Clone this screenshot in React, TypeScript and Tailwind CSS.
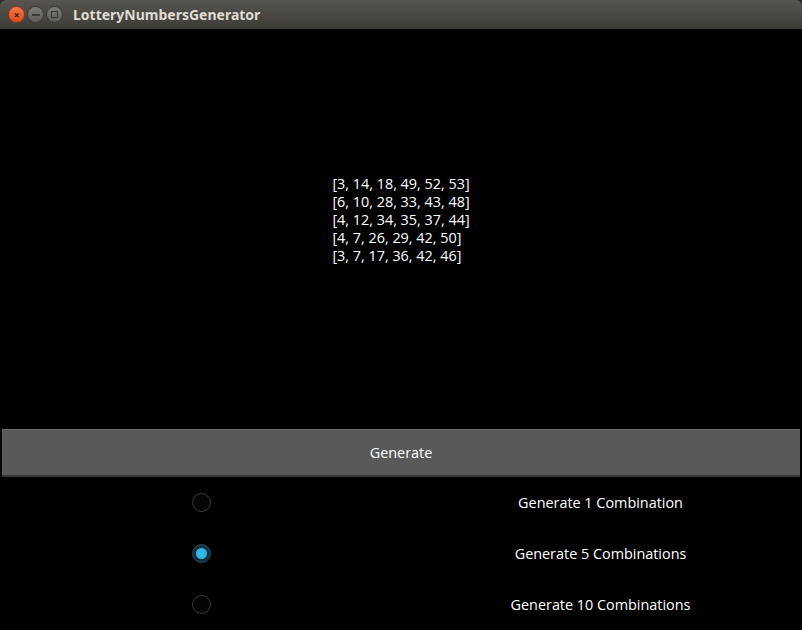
const combos = [
  "[3, 14, 18, 49, 52, 53]",
  "[6, 10, 28, 33, 43, 48]",
  "[4, 12, 34, 35, 37, 44]",
  "[4, 7, 26, 29, 42, 50]",
  "[3, 7, 17, 36, 42, 46]",
];

const options = [
  { label: "Generate 1 Combination", checked: false },
  { label: "Generate 5 Combinations", checked: true },
  { label: "Generate 10 Combinations", checked: false },
];

function Radio({ checked }: { checked: boolean }) {
  if (checked) {
    return (
      <div className="w-[19px] h-[19px] rounded-full bg-[#12303d] border border-[#2a4a58] flex items-center justify-center">
        <div className="w-[11px] h-[11px] rounded-full bg-[#33b5e5]" />
      </div>
    );
  }
  return <div className="w-[19px] h-[19px] rounded-full border border-[#3a3a3a] bg-[#050505]" />;
}

export default function App() {
  return (
    <div className="w-[802px] h-[630px] bg-[#2b2a27] flex flex-col overflow-hidden" style={{ fontFamily: '"Open Sans", "Noto Sans", sans-serif' }}>
      {/* Title bar */}
      <div className="h-[29px] rounded-t-[6px] bg-gradient-to-b from-[#57554f] to-[#3c3b37] flex items-center pl-[8px] shrink-0">
        <div className="flex items-center gap-[2px]">
          <div className="w-[17px] h-[17px] rounded-full bg-gradient-to-b from-[#f07746] to-[#df4a16] border border-[#8a3a1a] flex items-center justify-center text-[#3a1a0a] text-[10px] leading-none font-bold">
            ×
          </div>
          <div className="w-[17px] h-[17px] rounded-full bg-gradient-to-b from-[#7d7b75] to-[#5e5c57] border border-[#3a3935] flex items-center justify-center">
            <div className="w-[8px] h-[2px] bg-[#3a3935]" />
          </div>
          <div className="w-[17px] h-[17px] rounded-full bg-gradient-to-b from-[#7d7b75] to-[#5e5c57] border border-[#3a3935] flex items-center justify-center">
            <div className="w-[7px] h-[7px] border-[1.5px] border-[#3a3935]" />
          </div>
        </div>
        <span className="ml-[10px] text-[#dfdbd2] text-[14px] font-bold" style={{ fontFamily: '"Noto Sans", "Open Sans", sans-serif' }}>
          LotteryNumbersGenerator
        </span>
      </div>

      {/* Window content */}
      <div className="flex-1 bg-black flex flex-col px-[2px]">
        <div className="h-[400px] flex justify-center pt-[146px]">
          <div className="text-white text-[14.4px] leading-[18px]">
            {combos.map((c) => (
              <div key={c}>{c}</div>
            ))}
          </div>
        </div>

        <button className="h-[48px] w-full bg-[#595959] border-t border-t-[#6b6b6b] border-b-2 border-b-[#383838] text-white text-[14.4px]">
          Generate
        </button>

        <div className="flex-1 grid grid-rows-3">
          {options.map((o) => (
            <div key={o.label} className="grid grid-cols-2 items-center">
              <div className="flex justify-center">
                <Radio checked={o.checked} />
              </div>
              <div className="text-center text-white text-[14.4px]">{o.label}</div>
            </div>
          ))}
        </div>
      </div>
    </div>
  );
}
